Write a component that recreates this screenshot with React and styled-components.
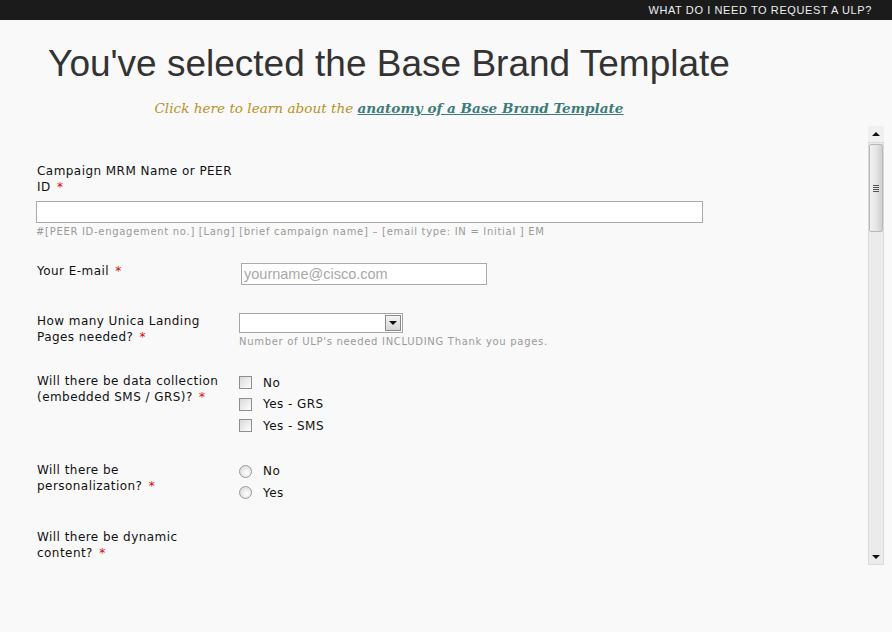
import { createGlobalStyle, styled } from "styled-components";

const GlobalStyle = createGlobalStyle`
  html, body {
    margin: 0;
    padding: 0;
  }
  body {
    background: #f9f9f9;
    font-family: "DejaVu Sans", Verdana, sans-serif;
    overflow: hidden;
  }
`;

const checkOptions = ["No", "Yes - GRS", "Yes - SMS"];
const radioOptions = ["No", "Yes"];

export default function App() {
  return (
    <>
      <GlobalStyle />
      <TopBar>
        <TopLink href="#">What do I need to request a ULP?</TopLink>
      </TopBar>
      <Header>
        <Title>You've selected the Base Brand Template</Title>
        <Intro>
          Click here to learn about the{" "}
          <IntroLink href="#">anatomy of a Base Brand Template</IntroLink>
        </Intro>
      </Header>
      <Panel>
        <ScrollArea>
          <Form>
            <StackRow>
              <WideLabel>
                Campaign MRM Name or PEER ID <Req>*</Req>
              </WideLabel>
              <WideInput type="text" />
              <Hint>
                #[PEER ID-engagement no.] [Lang] [brief campaign name] –
                [email type: IN = Initial ] EM
              </Hint>
            </StackRow>

            <Row>
              <Label>
                Your E-mail <Req>*</Req>
              </Label>
              <div>
                <EmailInput type="text" placeholder="yourname@cisco.com" />
              </div>
            </Row>

            <Row $offset={3}>
              <Label>
                How many Unica Landing Pages needed? <Req>*</Req>
              </Label>
              <div>
                <SelectWrap>
                  <Select />
                  <DropButton>
                    <ArrowDown />
                  </DropButton>
                </SelectWrap>
                <Hint>Number of ULP's needed INCLUDING Thank you pages.</Hint>
              </div>
            </Row>

            <Row>
              <Label>
                Will there be data collection (embedded SMS / GRS)?{" "}
                <Req>*</Req>
              </Label>
              <Options>
                {checkOptions.map((o) => (
                  <Option key={o}>
                    <Check type="checkbox" />
                    {o}
                  </Option>
                ))}
              </Options>
            </Row>

            <Row>
              <Label>
                Will there be personalization? <Req>*</Req>
              </Label>
              <Options>
                {radioOptions.map((o) => (
                  <Option key={o}>
                    <Radio type="radio" name="personal" />
                    {o}
                  </Option>
                ))}
              </Options>
            </Row>

            <Row>
              <Label>
                Will there be dynamic content? <Req>*</Req>
              </Label>
            </Row>
          </Form>
        </ScrollArea>
        <Scrollbar>
          <ScrollButton>
            <ArrowUp />
          </ScrollButton>
          <Track>
            <Thumb>
              <Grip />
            </Thumb>
          </Track>
          <ScrollButton $bottom>
            <ArrowDown />
          </ScrollButton>
        </Scrollbar>
      </Panel>
    </>
  );
}

const TopBar = styled.div`
  height: 20px;
  background: #1b1b1b;
  display: flex;
  justify-content: flex-end;
  align-items: center;
  padding-right: 20px;
`;

const TopLink = styled.a`
  color: #eeeeee;
  text-decoration: none;
  text-transform: uppercase;
  font-family: "Liberation Sans", Arial, sans-serif;
  font-size: 11px;
  letter-spacing: 0.6px;
`;

const Header = styled.div`
  width: 778px;
  text-align: center;
  padding-top: 22px;
`;

const Title = styled.h1`
  margin: 0;
  font-family: "Liberation Sans", Arial, sans-serif;
  font-weight: normal;
  font-size: 37px;
  line-height: 44px;
  color: #333333;
`;

const Intro = styled.p`
  margin: 13px 0 0;
  font-family: "DejaVu Serif", Georgia, serif;
  font-style: italic;
  font-size: 13.6px;
  line-height: 18px;
  color: #b8921e;
`;

const IntroLink = styled.a`
  color: #3d7c79;
  font-weight: bold;
  text-decoration: underline;
`;

const Panel = styled.div`
  margin: 9px 8px 0 28px;
  height: 439px;
  display: flex;
`;

const ScrollArea = styled.div`
  flex: 1;
  overflow: hidden;
`;

const Form = styled.form`
  padding: 37px 0 0 8px;
  display: flex;
  flex-direction: column;
  gap: 25px;
  font-size: 12px;
  line-height: 16px;
  letter-spacing: 0.45px;
  color: #111111;
`;

const StackRow = styled.div`
  display: flex;
  flex-direction: column;
  align-items: flex-start;
`;

const Row = styled.div`
  display: grid;
  grid-template-columns: 203px 1fr;
  align-items: start;
  margin-top: ${(p) => p.$offset || 0}px;
`;

const Label = styled.label`
  padding: 0 12px 0 1px;
`;

const WideLabel = styled.label`
  width: 200px;
  padding-left: 1px;
  margin-bottom: 6px;
`;

const Req = styled.span`
  color: #dd0000;
  margin-left: 2px;
`;

const inputBase = `
  box-sizing: border-box;
  height: 22px;
  border: 1px solid #a9a9ae;
  background: #ffffff;
  margin: 0;
`;

const WideInput = styled.input`
  ${inputBase}
  width: 667px;
`;

const EmailInput = styled.input`
  ${inputBase}
  width: 246px;
  margin-left: 2px;
  padding: 0 2px;
  font-family: "Liberation Sans", Arial, sans-serif;
  font-size: 14.5px;
  letter-spacing: 0;

  &::placeholder {
    color: #a8a8a8;
  }
`;

const Hint = styled.div`
  margin-top: 3px;
  font-size: 10px;
  line-height: 12px;
  letter-spacing: 0.7px;
  color: #999999;
`;

const SelectWrap = styled.div`
  position: relative;
  width: 164px;
  height: 20px;
`;

const Select = styled.select`
  appearance: none;
  box-sizing: border-box;
  width: 100%;
  height: 100%;
  margin: 0;
  border: 1px solid #a5a5a5;
  background: #ffffff;
`;

const DropButton = styled.span`
  position: absolute;
  top: 2px;
  right: 2px;
  width: 14px;
  height: 14px;
  border: 1px solid #8c8c8c;
  background: linear-gradient(#f4f4f4, #d6d6d6);
  display: grid;
  place-items: center;
`;

const ArrowDown = styled.span`
  width: 0;
  height: 0;
  border-left: 4px solid transparent;
  border-right: 4px solid transparent;
  border-top: 4px solid #111111;
`;

const ArrowUp = styled.span`
  width: 0;
  height: 0;
  border-left: 4px solid transparent;
  border-right: 4px solid transparent;
  border-bottom: 4px solid #111111;
`;

const Options = styled.div`
  display: flex;
  flex-direction: column;
  margin-top: -1px;
`;

const Option = styled.label`
  display: flex;
  align-items: center;
  gap: 11px;
  height: 21.5px;
`;

const Check = styled.input`
  appearance: none;
  margin: 0;
  width: 13px;
  height: 13px;
  border: 1px solid #8e8e8e;
  background: linear-gradient(135deg, #d9d9d9, #ffffff);
`;

const Radio = styled.input`
  appearance: none;
  margin: 0;
  width: 13px;
  height: 13px;
  border: 1px solid #9a9a9a;
  border-radius: 50%;
  background: radial-gradient(circle at 60% 60%, #ffffff, #d2d2d2);
`;

const Scrollbar = styled.div`
  width: 16px;
  display: flex;
  flex-direction: column;
  background: #eaeaea;
`;

const ScrollButton = styled.div`
  height: 16px;
  display: grid;
  place-items: center;
  background: ${(p) => (p.$bottom ? "#ebebeb" : "#f0f0f0")};
  border: 1px solid ${(p) => (p.$bottom ? "#dadada" : "#f0f0f0")};
  border-top: none;
  box-sizing: border-box;
`;

const Track = styled.div`
  flex: 1;
  background: #ebebeb;
  border: 1px solid #dadada;
  border-bottom: none;
  padding-top: 1px;
`;

const Thumb = styled.div`
  height: 86px;
  border: 1px solid #b8b8b8;
  border-radius: 2px;
  background: linear-gradient(90deg, #f2f2f2, #e6e6e6 50%, #cfcfcf);
  display: grid;
  place-items: center;
`;

const Grip = styled.span`
  width: 6px;
  height: 7px;
  background: repeating-linear-gradient(
    #555555 0 1px,
    transparent 1px 2px
  );
`;
